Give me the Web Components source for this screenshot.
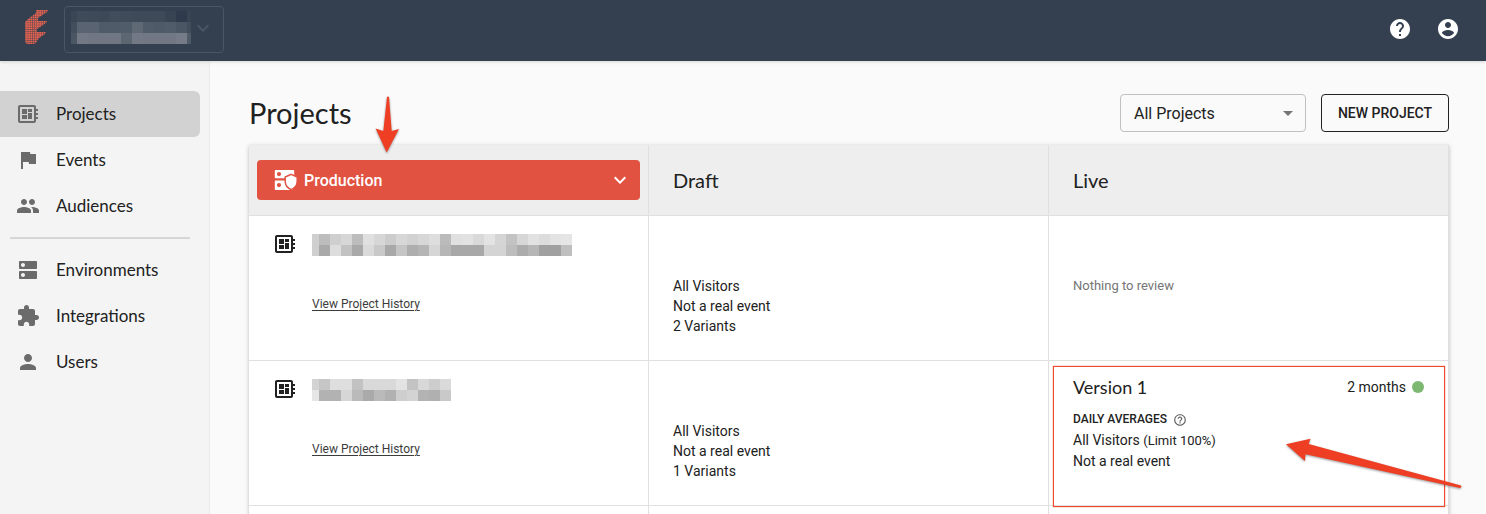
<!DOCTYPE html>
<html lang="en">
<head>
<meta charset="utf-8">
<meta name="viewport" content="width=device-width, initial-scale=1">
<title>Projects</title>
<style>
  html, body {
    height: 100%;
    margin: 0;
  }

  body {
    background: #fafafa;
    color: #212121;
    display: flex;
    flex-direction: column;
    font-family: Roboto, sans-serif;
    font-size: 14px;
    overflow: hidden;
    --display-font: Lato, sans-serif;
    --line: #e0e0e0;
    --accent: #e25241;
  }

  .layout {
    display: flex;
    flex: 1;
    min-height: 0;
  }

  main {
    flex: 1;
    min-width: 0;
    overflow: hidden;
    padding: 33px 37px 0 39px;
  }
</style>
</head>
<body>
  <app-header></app-header>
  <div class="layout">
    <side-nav>
      <nav-item icon="board" active>Projects</nav-item>
      <nav-item icon="flag">Events</nav-item>
      <nav-item icon="group">Audiences</nav-item>
      <nav-item slot="admin" icon="dns">Environments</nav-item>
      <nav-item slot="admin" icon="extension">Integrations</nav-item>
      <nav-item slot="admin" icon="person">Users</nav-item>
    </side-nav>
    <main>
      <page-toolbar>Projects</page-toolbar>
      <projects-table></projects-table>
    </main>
  </div>

<script>
// icons, all on a 24px grid
const ICONS = {
  board: `<path d="M22 9V7h-2V5c0-1.1-.9-2-2-2H4c-1.1 0-2 .9-2 2v14c0 1.1.9 2 2 2h14c1.1 0 2-.9 2-2v-2h2v-2h-2v-2h2v-2h-2V9h2zm-4 10H4V5h14v14zM6 13h5v4H6zm6-6h4v3h-4zM6 7h5v5H6zm6 4h4v6h-4z"/>`,
  flag: `<path d="M14.4 6L14 4H5v17h2v-7h5.6l.4 2h7V6z"/>`,
  group: `<path d="M16 11c1.66 0 2.99-1.34 2.99-3S17.66 5 16 5c-1.66 0-3 1.34-3 3s1.34 3 3 3zm-8 0c1.66 0 2.99-1.34 2.99-3S9.66 5 8 5C6.34 5 5 6.34 5 8s1.34 3 3 3zm0 2c-2.33 0-7 1.17-7 3.5V19h14v-2.5c0-2.33-4.67-3.5-7-3.5zm8 0c-.29 0-.62.02-.97.05 1.16.84 1.97 1.97 1.97 3.45V19h6v-2.5c0-2.33-4.67-3.5-7-3.5z"/>`,
  dns: `<path d="M20 13H4c-.55 0-1 .45-1 1v6c0 .55.45 1 1 1h16c.55 0 1-.45 1-1v-6c0-.55-.45-1-1-1zM7 19c-1.1 0-2-.9-2-2s.9-2 2-2 2 .9 2 2-.9 2-2 2zM20 3H4c-.55 0-1 .45-1 1v6c0 .55.45 1 1 1h16c.55 0 1-.45 1-1V4c0-.55-.45-1-1-1zM7 9c-1.1 0-2-.9-2-2s.9-2 2-2 2 .9 2 2-.9 2-2 2z"/>`,
  extension: `<path d="M20.5 11H19V7c0-1.1-.9-2-2-2h-4V3.5C13 2.12 11.88 1 10.5 1S8 2.12 8 3.5V5H4c-1.1 0-1.99.9-1.99 2v3.8H3.5c1.49 0 2.7 1.21 2.7 2.7s-1.21 2.7-2.7 2.7H2V20c0 1.1.9 2 2 2h3.8v-1.5c0-1.49 1.21-2.7 2.7-2.7 1.49 0 2.7 1.21 2.7 2.7V22H17c1.1 0 2-.9 2-2v-4h1.5c1.38 0 2.5-1.12 2.5-2.5S21.88 11 20.5 11z"/>`,
  person: `<path d="M12 12c2.21 0 4-1.79 4-4s-1.79-4-4-4-4 1.79-4 4 1.79 4 4 4zm0 2c-2.67 0-8 1.34-8 4v2h16v-2c0-2.66-5.33-4-8-4z"/>`,
  help: `<path d="M12 2C6.48 2 2 6.48 2 12s4.48 10 10 10 10-4.48 10-10S17.52 2 12 2zm1 17h-2v-2h2v2zm2.07-7.75l-.9.92C13.45 12.9 13 13.5 13 15h-2v-.5c0-1.1.45-2.1 1.17-2.83l1.24-1.26c.37-.36.59-.86.59-1.41 0-1.1-.9-2-2-2s-2 .9-2 2H8c0-2.21 1.79-4 4-4s4 1.79 4 4c0 .88-.36 1.68-.93 2.25z"/>`,
  account: `<path d="M12 2C6.48 2 2 6.48 2 12s4.48 10 10 10 10-4.48 10-10S17.52 2 12 2zm0 3c1.66 0 3 1.34 3 3s-1.34 3-3 3-3-1.34-3-3 1.34-3 3-3zm0 14.2c-2.5 0-4.71-1.28-6-3.22.03-1.99 4-3.08 6-3.08 1.99 0 5.97 1.09 6 3.08-1.29 1.94-3.5 3.22-6 3.22z"/>`,
  helpOutline: `<path d="M11 18h2v-2h-2v2zm1-16C6.48 2 2 6.48 2 12s4.48 10 10 10 10-4.48 10-10S17.52 2 12 2zm0 18c-4.41 0-8-3.59-8-8s3.59-8 8-8 8 3.59 8 8-3.59 8-8 8zm0-14c-2.21 0-4 1.79-4 4h2c0-1.1.9-2 2-2s2 .9 2 2c0 2-3 1.75-3 5h2c0-2.25 3-2.5 3-5 0-2.21-1.79-4-4-4z"/>`,
  chevron: `<path d="M16.59 8.59L12 13.17 7.41 8.59 6 10l6 6 6-6z"/>`,
  caret: `<path d="M7 10l5 5 5-5z"/>`,
  secure: `<path fill-rule="evenodd" d="M2.8 2h17.4c.6 0 1 .4 1 1v6.200c0 .6-.4 1-1 1H2.800c-.6 0-1-.4-1-1V3c0-.6.4-1 1-1zM6 4a2.100 2.100 0 1 0 0 4.200A2.100 2.100 0 0 0 6 4zM2.800 12.500H20V22H2.800c-.6 0-1-.4-1-1v-7.500c0-.6.4-1 1-1zM6 15a2.100 2.100 0 1 0 0 4.200A2.100 2.100 0 0 0 6 15z"/><path d="M18.200 6.400l6 2.600v4.300c0 4-2.500 6.800-6 8.300-3.500-1.500-6-4.300-6-8.300V9z" stroke="#e25241" stroke-width="1.500"/><path fill="#e25241" d="M18.200 22h6v2h-6z"/>`
};

class AppIcon extends HTMLElement {
  constructor() {
    super();
    this.attachShadow({ mode: "open" });
  }

  connectedCallback() {
    this.shadowRoot.innerHTML = `<style>
      :host {
        display: block;
        flex: none;
        height: 24px;
        width: 24px;
      }

      svg {
        display: block;
        fill: currentColor;
        height: 100%;
        overflow: visible;
        width: 100%;
      }
    </style>
    <svg viewBox="0 0 24 24" aria-hidden="true">${ICONS[this.getAttribute("name")] || ""}</svg>`;
  }
}
customElements.define("app-icon", AppIcon);

// Colours of the masked names, one string per row of blocks
const MASKS = {
  account: {
    ends: [6, 4],
    rows: [
      "3b4655 404b5a 3f4a59 3e4958 424d5b 404b5a 3f4a59 3f4a59 3f4a59 394453 2f3b4c 394453",
      "434e5d 596371 596371 505b69 505b69 515c6a 5f6976 515c6a 4f5a68 515c6a 4b5665 424d5c",
      "4b5665 727985 707783 707783 707783 5c6671 727985 717884 717884 717884 757c87 505b6a"
    ]
  },
  first: {
    ends: [7, 11],
    rows: [
      "cfcfcf bdbdbd cfcfcf d7d7d7 bdbdbd e0e0e0 d7d7d7 cccccc d7d7d7 d2d2d2 d7d7d7 dedede bbbbbb e0e0e0 e2e2e2 d9d9d9 e3e3e3 d5d5d5 c3c3c3 d7d7d7 e2e2e2 dcdcdc e3e3e3 e5e5e5",
      "cfcfcf a9a9a9 dddddd c2c2c2 a9a9a9 dadada c9c9c9 a8a8a8 c5c5c5 aeaeae b5b5b5 d6d6d6 b6b6b6 a8a8a8 a8a8a8 a8a8a8 d4d4d4 d4d4d4 bdbdbd acacac b6b6b6 a0a0a0 a0a0a0 bfbfbf"
    ]
  },
  second: {
    ends: [7, 11],
    rows: [
      "d3d3d3 c6c6c6 dedede dedede c2c2c2 d9d9d9 d9d9d9 d9d9d9 e3e3e3 c3c3c3 d8d8d8 cdcdcd dadada",
      "e6e6e6 b2b2b2 b2b2b2 d6d6d6 bababa aaaaaa bababa b1b1b1 cecece d3d3d3 b3b3b3 b0b0b0 c9c9c9"
    ]
  }
};

class NameMask extends HTMLElement {
  constructor() {
    super();
    this.attachShadow({ mode: "open" });
  }

  connectedCallback() {
    const mask = MASKS[this.getAttribute("name")];
    const rows = mask.rows.map(row => row.split(" "));
    const inner = rows[0].length - 2;
    this.shadowRoot.innerHTML = `<style>
      :host {
        display: grid;
        flex: none;
        grid-auto-rows: 11px;
        grid-template-columns: ${mask.ends[0]}px repeat(${inner}, 11px) ${mask.ends[1]}px;
      }
    </style>
    ${rows.flat().map(color => `<span style="background:#${color}"></span>`).join("")}`;
  }
}
customElements.define("name-mask", NameMask);

class AppHeader extends HTMLElement {
  constructor() {
    super();
    const shadow = this.attachShadow({ mode: "open" });
    shadow.innerHTML = `<style>
      :host {
        display: block;
        position: relative;
        z-index: 1;
      }

      header {
        align-items: center;
        background: #343f4f;
        box-shadow: 0 1px 3px rgba(0, 0, 0, .15);
        color: #fff;
        display: flex;
        height: 61px;
        padding: 0 26px 0 24px;
      }

      .logo {
        height: 35px;
        margin: 0 16px 6px 0;
        width: 24px;
      }

      button {
        align-items: center;
        background: none;
        border: 0;
        color: inherit;
        display: flex;
        padding: 0;
      }

      .picker {
        border: 1px solid #4b5665;
        border-radius: 4px;
        color: #4b5665;
        height: 47px;
        margin-bottom: 2px;
        padding: 0 8px 4px 6px;
      }

      .actions {
        display: flex;
        gap: 24px;
        margin: 0 0 3px auto;
      }
    </style>
    <header>
      <svg class="logo" viewBox="0 0 24 35" aria-hidden="true">
        <defs>
          <pattern id="dots" width="2.200" height="2.200" patternUnits="userSpaceOnUse">
            <rect width="1.600" height="1.600" fill="#ee6450"/>
          </pattern>
        </defs>
        <path fill="#ee6450" fill-opacity=".3" d="M12 0h12l-1 2-3 2-3 2-3 2v3h9l-1 2-3 2-3 2-3 2v3h9l-1 2-3 2-3 2-2 3v1l-3 2H3l-2-2V12l3-3 4-3 4-3z"/>
        <path fill="url(#dots)" d="M12 0h12l-1 2-3 2-3 2-3 2v3h9l-1 2-3 2-3 2-3 2v3h9l-1 2-3 2-3 2-2 3v1l-3 2H3l-2-2V12l3-3 4-3 4-3z"/>
      </svg>
      <button class="picker" type="button" aria-label="Switch account">
        <name-mask name="account"></name-mask>
        <app-icon name="chevron"></app-icon>
      </button>
      <div class="actions">
        <button type="button" aria-label="Help"><app-icon name="help"></app-icon></button>
        <button type="button" aria-label="Account"><app-icon name="account"></app-icon></button>
      </div>
    </header>`;
  }
}
customElements.define("app-header", AppHeader);

class NavItem extends HTMLElement {
  constructor() {
    super();
    this.attachShadow({ mode: "open" });
  }

  connectedCallback() {
    this.shadowRoot.innerHTML = `<style>
      :host {
        display: block;
      }

      a {
        align-items: center;
        border-radius: 0 6px 6px 0;
        color: #212121;
        display: flex;
        font: 17px/24px var(--display-font);
        gap: 16px;
        height: 46px;
        padding-left: 16px;
        text-decoration: none;
      }

      :host([active]) a {
        background: #d2d2d2;
      }

      app-icon {
        color: #6b6b6b;
      }
    </style>
    <a href="#"><app-icon name="${this.getAttribute("icon")}"></app-icon><slot></slot></a>`;
  }
}
customElements.define("nav-item", NavItem);

class SideNav extends HTMLElement {
  constructor() {
    super();
    const shadow = this.attachShadow({ mode: "open" });
    shadow.innerHTML = `<style>
      :host {
        background: #f4f4f4;
        border-right: 1px solid #ebebeb;
        box-sizing: border-box;
        display: block;
        flex: none;
        padding: 30px 9px 0 0;
        width: 210px;
      }

      hr {
        background: #d6d6d6;
        border: 0;
        height: 2px;
        margin: 8px 10px;
      }
    </style>
    <nav>
      <slot></slot>
      <hr>
      <slot name="admin"></slot>
    </nav>`;
  }
}
customElements.define("side-nav", SideNav);

class PageToolbar extends HTMLElement {
  constructor() {
    super();
    const shadow = this.attachShadow({ mode: "open" });
    shadow.innerHTML = `<style>
      :host {
        align-items: center;
        display: flex;
        gap: 15px;
        margin-bottom: 13px;
      }

      h1 {
        flex: 1;
        font: 29px/38px var(--display-font);
        margin: 0;
      }

      .select {
        align-items: center;
        display: grid;
        width: 186px;
      }

      select, .select app-icon {
        grid-area: 1 / 1;
      }

      .select app-icon {
        color: #757575;
        justify-self: end;
        margin-right: 6px;
        pointer-events: none;
      }

      select {
        appearance: none;
        background: none;
        border: 1px solid #c0c0c0;
        border-radius: 4px;
        color: inherit;
        font: 16px Roboto, sans-serif;
        height: 38px;
        padding: 0 13px;
        width: 100%;
      }

      button {
        background: none;
        border: 1px solid #212121;
        border-radius: 4px;
        color: inherit;
        font: 500 14px Roboto, sans-serif;
        height: 38px;
        padding: 0;
        width: 128px;
      }
    </style>
    <h1><slot></slot></h1>
    <div class="select">
      <select aria-label="Filter projects">
        <option>All Projects</option>
      </select>
      <app-icon name="caret"></app-icon>
    </div>
    <button type="button">NEW PROJECT</button>`;
  }
}
customElements.define("page-toolbar", PageToolbar);

// Left column: icon, masked name and history link
class ProjectSummary extends HTMLElement {
  constructor() {
    super();
    this.attachShadow({ mode: "open" });
  }

  connectedCallback() {
    this.shadowRoot.innerHTML = `<style>
      :host {
        column-gap: 15px;
        display: grid;
        grid-template-columns: 24px 1fr;
        row-gap: 38px;
      }

      name-mask {
        align-self: end;
        justify-content: start;
      }

      a {
        color: #3c3c3c;
        font-size: 12px;
        grid-column: 2;
        justify-self: start;
        line-height: 20px;
        text-underline-offset: 2px;
      }
    </style>
    <app-icon name="board"></app-icon>
    <name-mask name="${this.getAttribute("mask")}"></name-mask>
    <a href="#">View Project History</a>`;
  }
}
customElements.define("project-summary", ProjectSummary);

class VersionCard extends HTMLElement {
  constructor() {
    super();
    const shadow = this.attachShadow({ mode: "open" });
    shadow.innerHTML = `<style>
      :host {
        display: block;
        line-height: 21px;
      }

      .top {
        align-items: center;
        display: flex;
        height: 20px;
        margin-bottom: 12px;
      }

      h3 {
        flex: 1;
        font: 18px/20px var(--display-font);
        margin: 0;
      }

      .dot {
        background: #7cb872;
        border-radius: 50%;
        height: 12px;
        margin-left: 6px;
        width: 12px;
      }

      .label {
        align-items: center;
        display: flex;
        font-size: 12px;
        font-weight: 500;
        gap: 6px;
      }

      .label app-icon {
        color: #616161;
        height: 14px;
        width: 14px;
      }
    </style>
    <div class="top">
      <h3><slot name="title"></slot></h3>
      <slot name="age"></slot>
      <span class="dot"></span>
    </div>
    <div class="label">DAILY AVERAGES <app-icon name="helpOutline"></app-icon></div>
    <slot></slot>`;
  }
}
customElements.define("version-card", VersionCard);

class ProjectsTable extends HTMLElement {
  constructor() {
    super();
    const shadow = this.attachShadow({ mode: "open" });
    shadow.innerHTML = `<style>
      :host {
        display: block;
      }

      table {
        background: #fff;
        border-spacing: 0;
        box-shadow: 0 1px 4px rgba(0, 0, 0, .25);
        table-layout: fixed;
        width: 100%;
      }

      th, td {
        border-bottom: 1px solid var(--line);
        box-sizing: border-box;
        position: relative;
        text-align: left;
      }

      th, td {
        border-right: 1px solid var(--line);
      }

      th {
        background: #eee;
        font: 20px/24px var(--display-font);
        height: 71px;
        padding: 0 24px;
      }

      th:first-child {
        padding: 0 8px;
      }

      td {
        height: 145px;
        line-height: 20px;
        padding: 16px 24px;
        vertical-align: top;
      }

      .low {
        padding-top: 60px;
      }

      .empty {
        color: #757575;
        font-size: 13px;
      }

      p {
        margin: 0;
      }

      small {
        font-size: 13px;
      }

      .env {
        align-items: center;
        background: var(--accent);
        border: 0;
        border-radius: 4px;
        color: #fff;
        display: flex;
        font: 500 16px Roboto, sans-serif;
        gap: 7px;
        height: 40px;
        padding: 0 8px 0 16px;
        width: 100%;
      }

      .env span {
        flex: 1;
        text-align: left;
      }

      /* callouts drawn over the table */
      .frame, .arrow {
        pointer-events: none;
        position: absolute;
        z-index: 1;
      }

      .frame {
        border: 1px solid #ee4a2c;
        box-shadow: 0 0 1px #ee4a2c;
        inset: 5px 3px -2px 4px;
      }

      .arrow {
        fill: #ee3f24;
        filter: drop-shadow(0 1px 1px rgba(0, 0, 0, .4));
        overflow: visible;
      }

      .arrow.down {
        left: 126px;
        top: -49px;
      }

      .arrow.left {
        right: -14px;
        top: 77px;
      }
    </style>
    <table>
      <thead>
        <tr>
          <th scope="col">
            <button class="env" type="button">
              <app-icon name="secure"></app-icon><span>Production</span><app-icon name="chevron"></app-icon>
            </button>
            <svg class="arrow down" width="24" height="57" aria-hidden="true">
              <path d="M12 1q1-1 2 0l2.700 34 7.300-2-12.300 23.500L.6 32.500l7.700 2.500z"/>
            </svg>
          </th>
          <th scope="col">Draft</th>
          <th scope="col">Live</th>
        </tr>
      </thead>
      <tbody>
        <tr>
          <td><project-summary mask="first"></project-summary></td>
          <td class="low"><p>All Visitors</p><p>Not a real event</p><p>2 Variants</p></td>
          <td class="low empty">Nothing to review</td>
        </tr>
        <tr>
          <td><project-summary mask="second"></project-summary></td>
          <td class="low"><p>All Visitors</p><p>Not a real event</p><p>1 Variants</p></td>
          <td>
            <version-card>
              <span slot="title">Version 1</span>
              <span slot="age">2 months</span>
              <p>All Visitors <small>(Limit 100%)</small></p>
              <p>Not a real event</p>
            </version-card>
            <div class="frame"></div>
            <svg class="arrow left" width="176" height="52" aria-hidden="true">
              <path d="M0 6.300L24.500.7l-1.800 5.300L175 47.600q1 2-1 2.400L19.500 16.300l-.6 6.700z"/>
            </svg>
          </td>
        </tr>
        <tr><td></td><td></td><td></td></tr>
      </tbody>
    </table>`;
  }
}
customElements.define("projects-table", ProjectsTable);
</script>
</body>
</html>
